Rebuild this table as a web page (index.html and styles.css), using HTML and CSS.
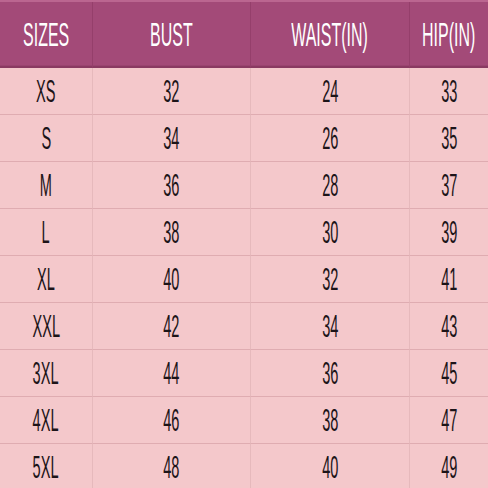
FILE: index.html
```html
<!DOCTYPE html>
<html>
<head>
<meta charset="utf-8">
<link rel="stylesheet" href="styles.css">
</head>
<body>
<div class="chart">
  <div class="cell head"><span class="t">SIZES</span></div>
  <div class="cell head"><span class="t">BUST</span></div>
  <div class="cell head"><span class="t">WAIST(IN)</span></div>
  <div class="cell head last"><span class="t">HIP(IN)</span></div>

  <div class="cell"><span class="t">XS</span></div><div class="cell"><span class="t">32</span></div><div class="cell"><span class="t">24</span></div><div class="cell last"><span class="t">33</span></div>
  <div class="cell"><span class="t">S</span></div><div class="cell"><span class="t">34</span></div><div class="cell"><span class="t">26</span></div><div class="cell last"><span class="t">35</span></div>
  <div class="cell"><span class="t">M</span></div><div class="cell"><span class="t">36</span></div><div class="cell"><span class="t">28</span></div><div class="cell last"><span class="t">37</span></div>
  <div class="cell"><span class="t">L</span></div><div class="cell"><span class="t">38</span></div><div class="cell"><span class="t">30</span></div><div class="cell last"><span class="t">39</span></div>
  <div class="cell"><span class="t">XL</span></div><div class="cell"><span class="t">40</span></div><div class="cell"><span class="t">32</span></div><div class="cell last"><span class="t">41</span></div>
  <div class="cell"><span class="t">XXL</span></div><div class="cell"><span class="t">42</span></div><div class="cell"><span class="t">34</span></div><div class="cell last"><span class="t">43</span></div>
  <div class="cell"><span class="t">3XL</span></div><div class="cell"><span class="t">44</span></div><div class="cell"><span class="t">36</span></div><div class="cell last"><span class="t">45</span></div>
  <div class="cell"><span class="t">4XL</span></div><div class="cell"><span class="t">46</span></div><div class="cell"><span class="t">38</span></div><div class="cell last"><span class="t">47</span></div>
  <div class="cell"><span class="t">5XL</span></div><div class="cell"><span class="t">48</span></div><div class="cell"><span class="t">40</span></div><div class="cell last"><span class="t">49</span></div>
</div>
</body>
</html>
```
FILE: styles.css
```css
html, body {
  margin: 0;
  padding: 0;
  background: #f4c8cb;
  overflow: hidden;
}
.chart {
  width: 488px;
  height: 488px;
  display: grid;
  grid-template-columns: 93px 158px 159px 78px;
  grid-template-rows: 66px repeat(9, 47px);
  border-top: 2px solid #bb6690;
  box-sizing: border-box;
  font-family: "Liberation Sans", Arial, sans-serif;
}
.cell {
  display: flex;
  align-items: center;
  justify-content: center;
  border-right: 1px solid #e6b9bc;
  border-bottom: 1px solid #dfacb1;
  box-sizing: border-box;
  color: #1c1418;
  font-size: 31px;
  overflow: hidden;
}
.cell.last {
  border-right: none;
}
.head {
  background: #a34a78;
  color: #ffffff;
  font-size: 34px;
  border-right: 1px solid #953f6b;
  border-bottom: 2px solid #8a3a62;
  box-shadow: inset 0 -1px 0 #9a4470;
}
.head.last {
  border-right: none;
}
.t {
  display: inline-block;
  transform: scaleX(0.47);
  white-space: nowrap;
  line-height: 1;
}
```
